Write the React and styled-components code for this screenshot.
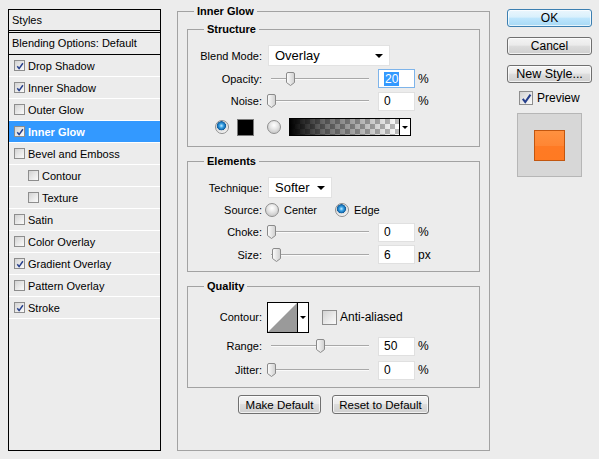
import styled, { createGlobalStyle } from "styled-components";

const GlobalStyle = createGlobalStyle`
  html, body {
    margin: 0;
    padding: 0;
    background: #ececec;
  }
  body {
    font-family: "Liberation Sans", Arial, sans-serif;
    font-size: 11px;
    color: #000;
  }
`;

const Dialog = styled.div`
  display: flex;
  align-items: flex-start;
  width: 599px;
  height: 459px;
  padding: 4px 0 0 8px;
  box-sizing: border-box;
`;

/* ---------- left list ---------- */

const StylesList = styled.div`
  width: 153px;
  height: 442px;
  margin-top: 5px;
  box-sizing: border-box;
  border: 1px solid #000;
  flex: none;
`;

const ListHead = styled.div`
  height: ${(p) => (p.$double ? 23 : 22)}px;
  line-height: ${(p) => (p.$double ? 20 : 21)}px;
  box-sizing: border-box;
  padding-left: 3px;
  border-bottom: ${(p) => (p.$double ? "3px double #000" : "1px solid #000")};
`;

const ListItem = styled.div`
  display: flex;
  align-items: center;
  gap: 3px;
  height: 22px;
  box-sizing: border-box;
  border-bottom: 1px solid #fff;
  padding-left: ${(p) => (p.$indent ? 19 : 5)}px;
  background: ${(p) => (p.$active ? "#3399ff" : "transparent")};
  color: ${(p) => (p.$active ? "#fff" : "#000")};
  font-weight: ${(p) => (p.$active ? "bold" : "normal")};
`;

const CheckFrame = styled.span`
  display: inline-flex;
  align-items: center;
  justify-content: center;
  flex: none;
  width: ${(p) => p.$size}px;
  height: ${(p) => p.$size}px;
  box-sizing: border-box;
  border: 1px solid #8d8d8d;
  background: linear-gradient(135deg, #d2d2d2 0%, #ececec 60%, #fafafa 100%);
`;

const Check = ({ size = 11, checked }) => (
  <CheckFrame $size={size}>
    {checked && (
      <svg width={size - 3} height={size - 3} viewBox="0 0 8 8">
        <path d="M1.3 4.3 L3.1 6.6 L6.9 1.2" fill="none" stroke="#263f8c" strokeWidth="1.5" />
      </svg>
    )}
  </CheckFrame>
);

/* ---------- middle groups ---------- */

const Group = styled.fieldset`
  margin: 0;
  padding: 0;
  min-width: 0;
  box-sizing: border-box;
  border: 1px solid #a2a2a2;
`;

const OuterGroup = styled(Group)`
  width: 313px;
  height: 447px;
  margin-left: 16px;
  flex: none;
`;

const Legend = styled.legend`
  margin-left: 16px;
  padding: 0 3px;
  font-weight: bold;
  font-size: 11px;
  line-height: 14px;
`;

const OuterBody = styled.div`
  display: flex;
  flex-direction: column;
  gap: 7px;
  padding: 4px 9px 0;
`;

const GroupBody = styled.div`
  padding: 8px 0 ${(p) => p.$pb}px;
`;

const Row = styled.div`
  display: flex;
  align-items: center;
  height: ${(p) => p.$h || 23}px;
  padding-left: ${(p) => p.$pl || 0}px;
`;

const Label = styled.span`
  width: 74px;
  flex: none;
  text-align: right;
  margin-right: ${(p) => p.$gap ?? 6}px;
`;

const Select = styled.div`
  display: flex;
  align-items: center;
  justify-content: space-between;
  width: ${(p) => p.$w}px;
  height: 21px;
  box-sizing: border-box;
  padding: 0 6px;
  background: #fff;
  border: 1px solid #e2e2e2;
  font-size: 13px;
`;

const Caret = styled.span`
  width: 0;
  height: 0;
  border-left: ${(p) => p.$s}px solid transparent;
  border-right: ${(p) => p.$s}px solid transparent;
  border-top: ${(p) => p.$s}px solid #000;
`;

const SliderBox = styled.div`
  position: relative;
  width: 98px;
  height: 14px;
  margin: 0 9px 0 3px;
  flex: none;

  &::before {
    content: "";
    position: absolute;
    left: 0;
    right: 0;
    top: 6px;
    height: 1px;
    background: #a8a8a8;
    border-bottom: 1px solid #fafafa;
  }
`;

const ThumbSvg = styled.svg`
  position: absolute;
  top: 0;
`;

const Slider = ({ value }) => (
  <SliderBox>
    <ThumbSvg width="9" height="14" viewBox="0 0 9 14" style={{ left: value * 0.98 - 4.5 }}>
      <defs>
        <linearGradient id="thumbG" x1="0" x2="1">
          <stop offset="0" stopColor="#fdfdfd" />
          <stop offset="1" stopColor="#cfcfcf" />
        </linearGradient>
      </defs>
      <path
        d="M2 0.5 H7 A1.5 1.5 0 0 1 8.5 2 V10.5 L4.5 13.5 L0.5 10.5 V2 A1.5 1.5 0 0 1 2 0.5 Z"
        fill="url(#thumbG)"
        stroke="#8a8a8a"
      />
    </ThumbSvg>
  </SliderBox>
);

const NumberField = styled.div`
  display: flex;
  align-items: center;
  width: 37px;
  height: 19px;
  box-sizing: border-box;
  padding-left: 5px;
  background: #fff;
  border: 1px solid ${(p) => (p.$focus ? "#7eb4ea" : "#e0e0e0")};
  font-size: 12px;
  flex: none;
`;

const Selected = styled.span`
  background: #3399ff;
  color: #fff;
  padding: 0 1px;
  line-height: 14px;
`;

const Unit = styled.span`
  margin-left: 3px;
  font-size: 12px;
`;

const Radio = styled.span`
  width: 14px;
  height: 14px;
  flex: none;
  box-sizing: border-box;
  border-radius: 50%;
  border: 1px solid #8e8e8e;
  margin-right: ${(p) => p.$mr || 0}px;
  background: ${(p) =>
    p.$on
      ? "radial-gradient(circle at 45% 40%, #c4ecff 0, #3aa3e6 2px, #0d5c9e 4.3px, #dcdcdc 4.8px, #f6f6f6 7px)"
      : "radial-gradient(circle at 50% 35%, #ffffff 0, #e6e6e6 4px, #cfcfcf 7px)"};
`;

const RadioText = styled.span`
  margin-right: ${(p) => p.$mr || 0}px;
`;

const Swatch = styled.span`
  width: 17px;
  height: 17px;
  box-sizing: border-box;
  border: 1px solid #7a7a7a;
  background: #000;
  margin-right: 13px;
  flex: none;
`;

const GradientPicker = styled.div`
  display: flex;
  width: 122px;
  height: 18px;
  box-sizing: border-box;
  border: 1px solid #000;
  flex: none;
`;

const GradientFill = styled.div`
  flex: 1;
  background-image: linear-gradient(to right, #000 0%, rgba(0, 0, 0, 0.6) 30%, rgba(0, 0, 0, 0) 100%),
    conic-gradient(#bdbdbd 25%, #fff 0 50%, #bdbdbd 0 75%, #fff 0);
  background-size: 100% 100%, 10px 10px;
`;

const DropPart = styled.div`
  display: flex;
  align-items: center;
  justify-content: center;
  width: 10px;
  border-left: 1px solid #000;
  background: #fff;
`;

const ContourPicker = styled.div`
  display: flex;
  width: 42px;
  height: 31px;
  box-sizing: border-box;
  border: 1px solid #000;
  margin-right: 13px;
  flex: none;
  background: #fff;
`;

const CheckLabel = styled.span`
  margin-left: 3px;
  font-size: 12px;
`;

const ButtonRow = styled.div`
  display: flex;
  justify-content: center;
  gap: 11px;
`;

const Button = styled.button`
  width: ${(p) => p.$w}px;
  height: ${(p) => p.$h || 18}px;
  padding: 0;
  font-family: "Liberation Sans", Arial, sans-serif;
  font-size: ${(p) => p.$fs || 12}px;
  color: #000;
  border-radius: 3px;
  border: 1px solid ${(p) => (p.$primary ? "#3c7fb1" : "#707070")};
  background: ${(p) =>
    p.$primary
      ? "linear-gradient(#eaf6fd 0%, #d9f0fc 45%, #bee6fd 50%, #a7d9f5 100%)"
      : "linear-gradient(#f4f4f4 0%, #ebebeb 45%, #dddddd 50%, #cfcfcf 100%)"};
  box-shadow: inset 0 0 0 1px rgba(255, 255, 255, 0.7);
`;

/* ---------- right column ---------- */

const Side = styled.div`
  display: flex;
  flex-direction: column;
  gap: 10px;
  margin: 5px 0 0 17px;
  width: 85px;
`;

const PreviewToggle = styled.div`
  display: flex;
  align-items: center;
  gap: 4px;
  margin-top: -2px;
  padding-left: 12px;
  font-size: 12px;
`;

const PreviewBox = styled.div`
  display: flex;
  align-items: center;
  justify-content: center;
  width: 65px;
  height: 64px;
  margin: -2px 0 0 10px;
  box-sizing: border-box;
  border: 1px solid #b6b6b6;
  background: #d7d7d7;
`;

const OrangeSquare = styled.div`
  width: 31px;
  height: 31px;
  box-sizing: border-box;
  border: 1px solid #c2560f;
  background: linear-gradient(#ff9140 0%, #ff8634 50%, #ff7a24 52%, #ff7a22 100%);
`;

const items = [
  { name: "Drop Shadow", checked: true },
  { name: "Inner Shadow", checked: true },
  { name: "Outer Glow" },
  { name: "Inner Glow", checked: true, active: true },
  { name: "Bevel and Emboss" },
  { name: "Contour", indent: true },
  { name: "Texture", indent: true },
  { name: "Satin" },
  { name: "Color Overlay" },
  { name: "Gradient Overlay", checked: true },
  { name: "Pattern Overlay" },
  { name: "Stroke", checked: true },
];

const SliderRow = ({ label, value, text, unit, focus, h }) => (
  <Row $h={h}>
    <Label>{label}</Label>
    <Slider value={value} />
    <NumberField $focus={focus}>{focus ? <Selected>{text}</Selected> : text}</NumberField>
    <Unit>{unit}</Unit>
  </Row>
);

export default function App() {
  return (
    <>
      <GlobalStyle />
      <Dialog>
        <StylesList>
          <ListHead $double>Styles</ListHead>
          <ListHead>Blending Options: Default</ListHead>
          {items.map((it) => (
            <ListItem key={it.name} $indent={it.indent} $active={it.active}>
              <Check checked={it.checked} />
              {it.name}
            </ListItem>
          ))}
        </StylesList>

        <OuterGroup>
          <Legend>Inner Glow</Legend>
          <OuterBody>
            <Group>
              <Legend>Structure</Legend>
              <GroupBody $pb={4}>
                <Row>
                  <Label>Blend Mode:</Label>
                  <Select $w={122}>
                    Overlay
                    <Caret $s={4} />
                  </Select>
                </Row>
                <SliderRow label="Opacity:" value={20} text="20" unit="%" focus />
                <SliderRow label="Noise:" value={0} text="0" unit="%" h={22} />
                <Row $h={30} $pl={27}>
                  <Radio $on $mr={8} />
                  <Swatch />
                  <Radio $mr={8} />
                  <GradientPicker>
                    <GradientFill />
                    <DropPart>
                      <Caret $s={3} />
                    </DropPart>
                  </GradientPicker>
                </Row>
              </GroupBody>
            </Group>

            <Group>
              <Legend>Elements</Legend>
              <GroupBody $pb={5}>
                <Row>
                  <Label>Technique:</Label>
                  <Select $w={64}>
                    Softer
                    <Caret $s={4} />
                  </Select>
                </Row>
                <Row $h={22}>
                  <Label $gap={3}>Source:</Label>
                  <Radio $mr={5} />
                  <RadioText $mr={18}>Center</RadioText>
                  <Radio $on $mr={5} />
                  <RadioText>Edge</RadioText>
                </Row>
                <SliderRow label="Choke:" value={0} text="0" unit="%" h={22} />
                <SliderRow label="Size:" value={6} text="6" unit="px" />
              </GroupBody>
            </Group>

            <Group>
              <Legend>Quality</Legend>
              <GroupBody $pb={6}>
                <Row $h={32}>
                  <Label $gap={5}>Contour:</Label>
                  <ContourPicker>
                    <svg width="29" height="29" viewBox="0 0 29 29">
                      <path d="M0 29 L29 0 L29 29 Z" fill="#9a9a9a" />
                    </svg>
                    <DropPart>
                      <Caret $s={3} />
                    </DropPart>
                  </ContourPicker>
                  <Check size={15} />
                  <CheckLabel>Anti-aliased</CheckLabel>
                </Row>
                <SliderRow label="Range:" value={50} text="50" unit="%" h={26} />
                <SliderRow label="Jitter:" value={0} text="0" unit="%" h={22} />
              </GroupBody>
            </Group>

            <ButtonRow>
              <Button $w={83} $h={19} $fs={11.5}>Make Default</Button>
              <Button $w={97} $h={19} $fs={11.5}>Reset to Default</Button>
            </ButtonRow>
          </OuterBody>
        </OuterGroup>

        <Side>
          <Button $w={85} $primary>OK</Button>
          <Button $w={85}>Cancel</Button>
          <Button $w={85} $fs={12.5}>New Style...</Button>
          <PreviewToggle>
            <Check size={14} checked />
            Preview
          </PreviewToggle>
          <PreviewBox>
            <OrangeSquare />
          </PreviewBox>
        </Side>
      </Dialog>
    </>
  );
}
